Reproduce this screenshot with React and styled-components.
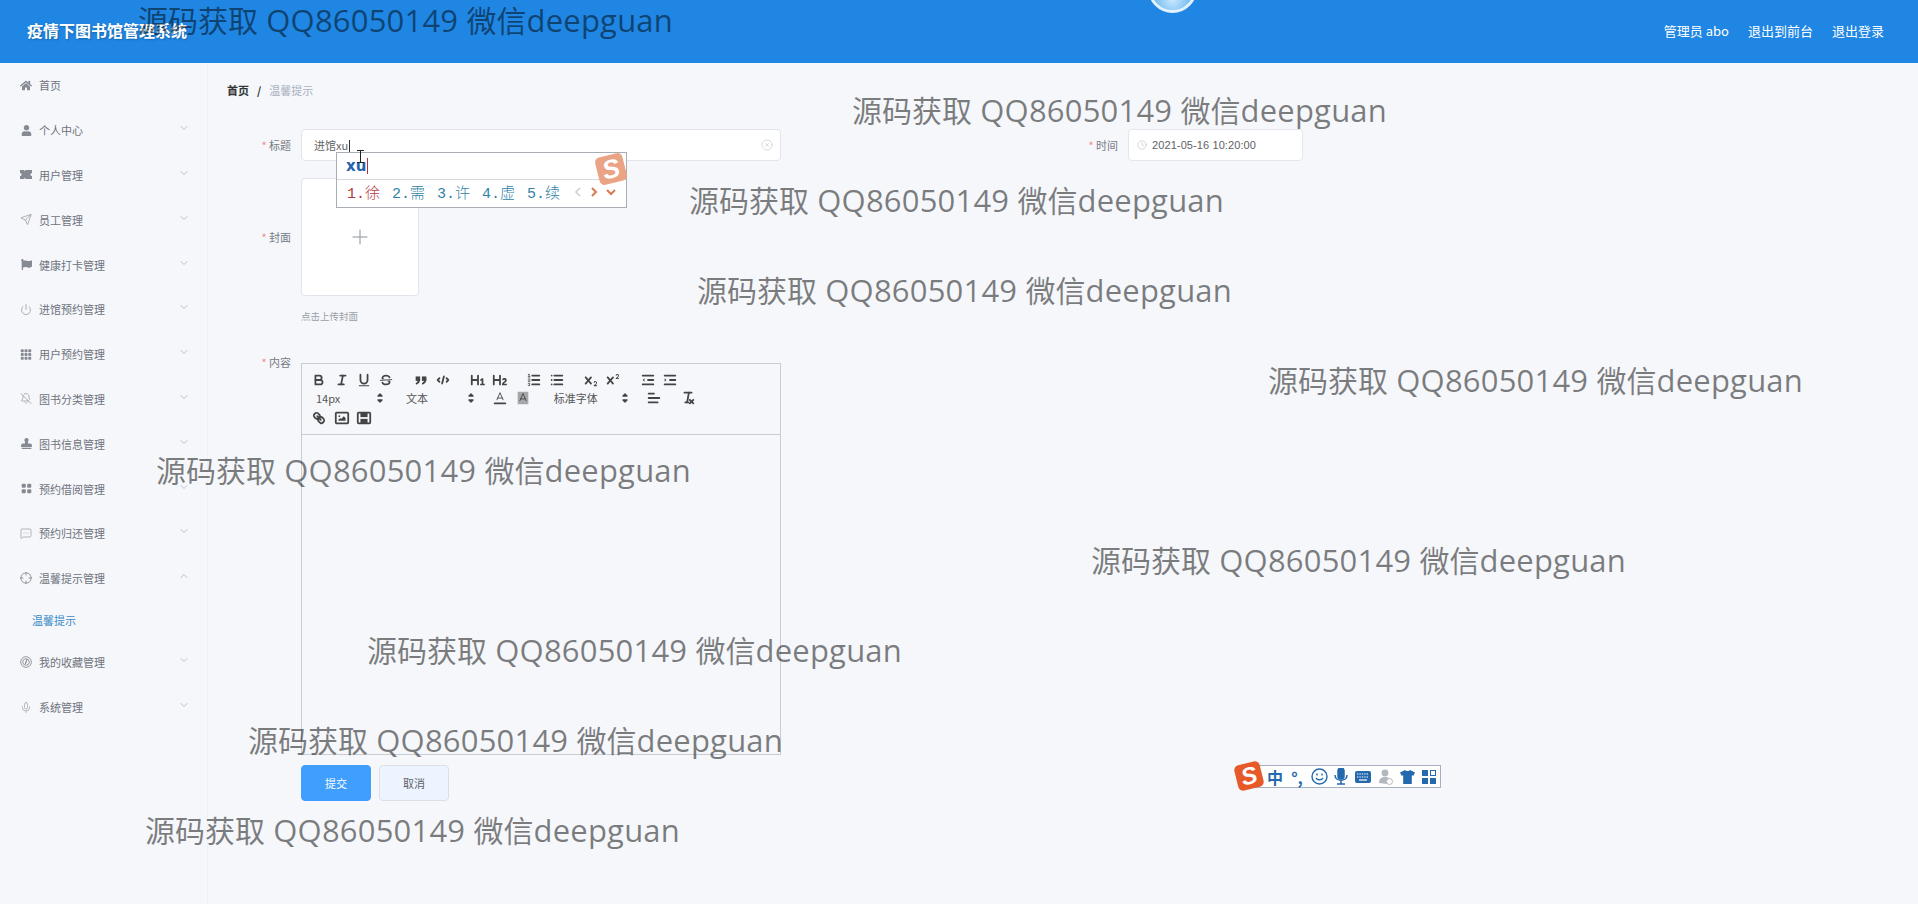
import styled, { createGlobalStyle } from "styled-components";
import { FaHome, FaUser, FaFlag, FaStamp } from "react-icons/fa";
import { BsGrid3X3GapFill, BsGridFill } from "react-icons/bs";
import {
  Send,
  BellOff,
  Power,
  MessageSquareMore,
  Mic,
  ChevronDown,
  ChevronUp,
  Plus,
  Clock,
  CircleX,
} from "lucide-react";

const CJK = `"Noto Sans CJK SC", "Noto Sans", sans-serif`;

const GlobalStyle = createGlobalStyle`
  html, body {
    margin: 0;
    padding: 0;
    background: #f5f7fb;
    font-family: ${CJK};
  }
  * {
    box-sizing: border-box;
  }
`;

const Page = styled.div`
  display: flex;
  flex-direction: column;
  height: 904px;
  overflow: hidden;
  position: relative;
  width: 1918px;
`;

const Header = styled.header`
  align-items: center;
  background: #1f86e3;
  color: #fff;
  display: flex;
  flex: none;
  height: 63px;
  justify-content: space-between;
  padding: 0 34px 3px 27px;
`;

const Title = styled.h1`
  font-size: 16px;
  font-weight: 700;
  margin: 0;
  text-shadow: 1px 1px 2px rgba(0, 0, 0, 0.25);
`;

const HeaderLinks = styled.div`
  display: flex;
  font-size: 13px;
  gap: 19px;
`;

const Avatar = styled.div`
  background: radial-gradient(circle at 50% 75%, #cdeaff 0%, #6db8f0 50%, #2f8fe4 100%);
  border: 3px solid #e2f2fc;
  border-radius: 50%;
  height: 49px;
  left: 1148px;
  position: absolute;
  top: -36px;
  width: 49px;
`;

const Body = styled.div`
  display: flex;
  flex: 1;
  min-height: 0;
`;

const Sidebar = styled.nav`
  background: #f5f7fb;
  border-right: 1px solid #eff1f5;
  flex: none;
  width: 208px;
`;

const MenuItem = styled.div`
  align-items: center;
  color: #6e737c;
  display: flex;
  font-size: 11px;
  height: 44.8px;
  padding: 0 17px 0 20px;
`;

const MenuIcon = styled.span`
  align-items: center;
  color: #868a93;
  display: flex;
  flex: none;
  height: 14px;
  justify-content: center;
  margin-right: 7px;
  width: 12px;
`;

const MenuLabel = styled.span`
  flex: 1;
`;

const MenuArrow = styled.span`
  align-items: center;
  color: #a4a8b0;
  display: flex;
  margin-top: -4px;
`;

const SubItem = styled.div`
  align-items: center;
  color: #3a8ac6;
  display: flex;
  font-size: 11px;
  height: 39.5px;
  padding-left: 32px;
`;

const Main = styled.main`
  flex: 1;
  padding: 0 0 0 19px;
`;

const Breadcrumb = styled.div`
  align-items: center;
  display: flex;
  font-size: 11px;
  height: 54px;
`;

const CrumbHome = styled.span`
  color: #333;
  font-weight: 700;
`;

const CrumbSep = styled.span`
  color: #333;
  font-weight: 700;
  margin: 0 8px;
`;

const CrumbCurrent = styled.span`
  color: #a8b0bd;
`;

const Row = styled.div`
  align-items: center;
  display: flex;
  gap: 273px;
  margin-top: 12px;
`;

const Field = styled.div`
  align-items: ${(p) => p.$align || "center"};
  display: flex;
`;

const Label = styled.label`
  color: #777c85;
  flex: none;
  font-size: 11px;
  height: 32px;
  line-height: 32px;
  padding-right: 10px;
  text-align: right;
  width: 74px;
  &::before {
    color: #f08a8a;
    content: "* ";
  }
`;

const TextInput = styled.div`
  align-items: center;
  background: #fff;
  border: 1px solid #e1e4ea;
  border-radius: 4px;
  color: #666;
  display: flex;
  font-size: 11px;
  height: 32px;
  justify-content: space-between;
  padding: 0 7px 0 12px;
  width: 480px;
`;

const Caret = styled.span`
  border-left: 1px solid #333;
  display: inline-block;
  height: 12px;
  margin-left: 1px;
  vertical-align: -2px;
`;

const DateInput = styled.div`
  align-items: center;
  background: #fff;
  border: 1px solid #e4e7ed;
  border-radius: 4px;
  color: #606266;
  display: flex;
  font-family: "Liberation Sans", sans-serif;
  font-size: 11px;
  gap: 5px;
  height: 32px;
  letter-spacing: 0.1px;
  padding: 0 8px;
  width: 175px;
`;

const UploadRow = styled(Field)`
  margin-top: 17px;
`;

const UploadBox = styled.div`
  align-items: center;
  background: #fff;
  border: 1px solid #e1e4ea;
  border-radius: 4px;
  color: #8c939d;
  display: flex;
  height: 118px;
  justify-content: center;
  width: 118px;
`;

const Hint = styled.div`
  color: #9a9ea6;
  font-size: 9.5px;
  line-height: 14px;
  margin: 13px 0 0 74px;
`;

const EditorRow = styled(Field)`
  margin-top: 23px;
`;

const Editor = styled.div`
  border: 1px solid #c9cdd3;
  display: flex;
  flex-direction: column;
  height: 392px;
  margin-top: 17px;
  width: 480px;
`;

const Toolbar = styled.div`
  border-bottom: 1px solid #c9cdd3;
  display: flex;
  flex: none;
  flex-direction: column;
  height: 71px;
  padding: 6px 0 0 6px;
`;

const ToolRow = styled.div`
  display: flex;
  height: 19px;
`;

const PickerRow = styled(ToolRow)`
  margin: -1px 0 1px;
`;

const ToolGroup = styled.div`
  display: flex;
  margin-right: 12px;
`;

const ToolButton = styled.span`
  align-items: center;
  display: flex;
  height: 19px;
  justify-content: center;
  width: 22.4px;
  & svg {
    fill: none;
    height: 16px;
    stroke: #444;
    stroke-linecap: round;
    stroke-linejoin: round;
    stroke-width: 2px;
    width: 16px;
  }
  & svg .fill {
    fill: #444;
    stroke: none;
  }
  & svg .thin {
    stroke-width: 1px;
  }
`;

const Picker = styled.div`
  align-items: center;
  color: #555;
  display: flex;
  font-size: 11px;
  height: 19px;
  justify-content: space-between;
  margin-right: 12px;
  padding-left: 8px;
  width: ${(p) => p.$width}px;
  & svg {
    height: 18px;
    margin-right: -3px;
    width: 18px;
  }
`;

const EditorArea = styled.div`
  flex: 1;
`;

const Actions = styled.div`
  display: flex;
  gap: 8px;
  margin: 10px 0 0 74px;
`;

const Button = styled.button`
  background: ${(p) => (p.$primary ? "#409eff" : "#ecf5ff")};
  border: 1px solid ${(p) => (p.$primary ? "#409eff" : "#dcdfe6")};
  border-radius: 4px;
  color: ${(p) => (p.$primary ? "#fff" : "#606266")};
  font-family: ${CJK};
  font-size: 11px;
  height: 36px;
  padding: 0;
  width: 70px;
`;

const Watermark = styled.div`
  color: rgba(0, 0, 0, 0.5);
  font-family: ${CJK};
  font-size: 30px;
  left: ${(p) => p.$x}px;
  line-height: 40px;
  pointer-events: none;
  position: absolute;
  top: ${(p) => p.$y}px;
  white-space: pre;
  z-index: 5;
`;

const Latin = styled.span`
  font-family: "Open Sans", sans-serif;
  font-size: 31px;
  letter-spacing: 0.2px;
`;

const Beam = styled.div`
  border-left: 1px solid #222;
  height: 13px;
  left: 360px;
  position: absolute;
  top: 150px;
  z-index: 4;
  &::before,
  &::after {
    border-top: 1px solid #222;
    content: "";
    left: -4px;
    position: absolute;
    width: 7px;
  }
  &::before {
    top: 0;
  }
  &::after {
    bottom: 0;
  }
`;

const Candidates = styled.div`
  background: #fff;
  border: 1px solid #a9aeb5;
  height: 56px;
  left: 336px;
  position: absolute;
  top: 152px;
  width: 291px;
  z-index: 3;
`;

const Pinyin = styled.div`
  align-items: center;
  border-bottom: 1px solid #d5d8dc;
  color: #1f64ad;
  display: flex;
  font-family: "DejaVu Sans", sans-serif;
  font-size: 15px;
  font-weight: 700;
  height: 27px;
  padding-left: 9px;
`;

const RedCaret = styled.span`
  border-left: 1px solid #b03040;
  height: 16px;
  margin-left: 1px;
`;

const CandidateRow = styled.div`
  align-items: center;
  display: flex;
  height: 27px;
  padding: 0 0 3px 10px;
`;

const Candidate = styled.span`
  color: ${(p) => (p.$active ? "#b5343c" : "#2f83a6")};
  font-family: "Liberation Mono", "Noto Sans CJK SC", monospace;
  font-size: 15px;
  font-weight: 300;
  width: 45px;
`;

const PageArrows = styled.span`
  align-items: center;
  display: flex;
  gap: 8px;
  margin-left: 2px;
`;

const SogouLogo = styled.div`
  align-items: center;
  background: ${(p) => (p.$faded ? "#eba385" : "#e8592a")};
  border-radius: 5px;
  color: #fff;
  display: flex;
  font-family: "Liberation Sans", sans-serif;
  font-size: ${(p) => p.$size - 2}px;
  font-style: italic;
  font-weight: 700;
  height: ${(p) => p.$size}px;
  justify-content: center;
  line-height: 1;
  position: absolute;
  transform: rotate(-14deg);
  width: ${(p) => p.$size}px;
`;

const CandidateLogo = styled(SogouLogo)`
  right: 1px;
  top: 2px;
`;

const StatusBar = styled.div`
  align-items: center;
  background: #fff;
  border: 1px solid #a5b0c0;
  color: #2468ad;
  display: flex;
  height: 23px;
  left: 1250px;
  padding-left: 13px;
  position: absolute;
  top: 765px;
  width: 191px;
  z-index: 3;
`;

const StatusLogo = styled(SogouLogo)`
  left: -15px;
  top: -3px;
`;

const StatusItem = styled.span`
  align-items: center;
  display: flex;
  font-size: 16px;
  font-weight: 700;
  height: 100%;
  justify-content: center;
  width: 22px;
`;

const TicketIcon = () => (
  <svg width="15" height="11" viewBox="0 0 15 11" fill="currentColor">
    <path d="M0 0h5l1 1.5L7 0h8v3.5a2 2 0 0 0 0 4V11H7l-1-1.5L5 11H0V7.5a2 2 0 0 0 0-4z" />
  </svg>
);

const AimIcon = () => (
  <svg width="14" height="14" viewBox="0 0 14 14" fill="none" stroke="currentColor" strokeWidth="1">
    <circle cx="7" cy="7" r="6" />
    <path d="M7 0v4M7 10v4M0 7h4M10 7h4" />
  </svg>
);

const OdometerIcon = () => (
  <svg width="14" height="14" viewBox="0 0 14 14" fill="none" stroke="currentColor" strokeWidth="1">
    <circle cx="7" cy="7" r="6.2" />
    <circle cx="7" cy="7" r="3.8" />
    <path d="M6.2 9.4L8.2 3.6" strokeWidth="1.4" />
  </svg>
);

const MENU = [
  { label: "个人中心", icon: <FaUser size={11} /> },
  { label: "用户管理", icon: <TicketIcon /> },
  { label: "员工管理", icon: <Send size={13} strokeWidth={1.3} /> },
  { label: "健康打卡管理", icon: <FaFlag size={11} /> },
  { label: "进馆预约管理", icon: <Power size={13} strokeWidth={1.3} /> },
  { label: "用户预约管理", icon: <BsGrid3X3GapFill size={13} /> },
  { label: "图书分类管理", icon: <BellOff size={13} strokeWidth={1.3} /> },
  { label: "图书信息管理", icon: <FaStamp size={11} /> },
  { label: "预约借阅管理", icon: <BsGridFill size={11} /> },
  { label: "预约归还管理", icon: <MessageSquareMore size={13} strokeWidth={1.2} /> },
];

const WATERMARKS = [
  [138, -1],
  [852, 89],
  [689, 179],
  [697, 269],
  [1268, 359],
  [156, 449],
  [1091, 539],
  [367, 629],
  [248, 719],
  [145, 809],
];

const X_SHAPE =
  "M9.651,5.241a1,1,0,0,0-1.41.108L6,7.964,3.759,5.349a1,1,0,1,0-1.519,1.3L4.683,9.5,2.241,12.35a1,1,0,1,0,1.519,1.3L6,11.036,8.241,13.65a1,1,0,0,0,1.519-1.3L7.317,9.5,9.759,6.651A1,1,0,0,0,9.651,5.241Z";

// quill toolbar glyphs
const QUILL = {
  bold: (
    <>
      <path d="M5,4H9.5A2.5,2.5,0,0,1,12,6.5v0A2.5,2.5,0,0,1,9.5,9H5A0,0,0,0,1,5,9V4A0,0,0,0,1,5,4Z" />
      <path d="M5,9h5.5A2.5,2.5,0,0,1,13,11.5v0A2.5,2.5,0,0,1,10.5,14H5a0,0,0,0,1,0,0V9A0,0,0,0,1,5,9Z" />
    </>
  ),
  italic: (
    <>
      <line x1="7" x2="13" y1="4" y2="4" />
      <line x1="5" x2="11" y1="14" y2="14" />
      <line x1="8" x2="10" y1="14" y2="4" />
    </>
  ),
  underline: (
    <>
      <path d="M5,3V9a4.012,4.012,0,0,0,4,4H9a4.012,4.012,0,0,0,4-4V3" />
      <rect className="fill" x="3" y="15" width="12" height="1" rx="0.5" />
    </>
  ),
  strike: (
    <>
      <line className="thin" x1="15.5" x2="2.5" y1="8.5" y2="9.5" />
      <path className="fill" d="M9.007,8C6.542,7.791,6,7.519,6,6.5,6,5.792,7.283,5,9,5c1.571,0,2.765.679,2.969,1.309a1,1,0,0,0,1.9-.617C13.356,4.106,11.354,3,9,3,6.2,3,4,4.538,4,6.5a3.2,3.2,0,0,0,.5,1.843Z" />
      <path className="fill" d="M8.984,10C11.457,10.208,12,10.479,12,11.5c0,.708-1.283,1.5-3,1.5-1.571,0-2.765-.679-2.969-1.309a1,1,0,1,0-1.9.617C4.644,13.894,6.646,15,9,15c2.8,0,5-1.538,5-3.5a3.2,3.2,0,0,0-.5-1.843Z" />
    </>
  ),
  quote: (
    <>
      <rect className="fill" x="3" y="5" width="5" height="5" />
      <rect className="fill" x="10" y="5" width="5" height="5" />
      <path d="M7,8c0,4.031-3,5-3,5" />
      <path d="M14,8c0,4.031-3,5-3,5" />
    </>
  ),
  code: (
    <>
      <polyline points="5 7 3 9 5 11" />
      <polyline points="13 7 15 9 13 11" />
      <line x1="10" x2="8" y1="5" y2="13" />
    </>
  ),
  h1: (
    <path className="fill" d="M10,4V14a1,1,0,0,1-2,0V10H3v4a1,1,0,0,1-2,0V4A1,1,0,0,1,3,4V8H8V4a1,1,0,0,1,2,0Zm6.06787,9.209H14.98975V7.59863a.54085.54085,0,0,0-.605-.60547h-.62744a1.01119,1.01119,0,0,0-.748.29688L11.645,8.56641a.5435.5435,0,0,0-.022.8584l.28613.30762a.53861.53861,0,0,0,.84717.0332l.09912-.08789a1.2137,1.2137,0,0,0,.2417-.35254h.02246s-.01123.30859-.01123.60547V13.209H12.041a.54085.54085,0,0,0-.605.60547v.43945a.54085.54085,0,0,0,.605.60547h4.02686a.54085.54085,0,0,0,.605-.60547v-.43945A.54085.54085,0,0,0,16.06787,13.209Z" />
  ),
  h2: (
    <path className="fill" d="M16.73975,13.81445v.43945a.54085.54085,0,0,1-.605.60547H11.855a.58392.58392,0,0,1-.64893-.60547V14.0127c0-2.90527,3.39941-3.42187,3.39941-4.55469a.77675.77675,0,0,0-.84717-.78125,1.17684,1.17684,0,0,0-.83594.38477c-.2749.26367-.561.374-.85791.13184l-.4292-.34082c-.30811-.24219-.38525-.51758-.1543-.81445a2.97155,2.97155,0,0,1,2.45361-1.17676,2.45393,2.45393,0,0,1,2.68408,2.40918c0,2.45312-3.1792,2.92676-3.27832,3.93848h2.79443A.54085.54085,0,0,1,16.73975,13.81445ZM9,3A.99974.99974,0,0,0,8,4V8H3V4A1,1,0,0,0,1,4V14a1,1,0,0,0,2,0V10H8v4a1,1,0,0,0,2,0V4A.99974.99974,0,0,0,9,3Z" />
  ),
  ordered: (
    <>
      <line x1="7" x2="15" y1="4" y2="4" />
      <line x1="7" x2="15" y1="9" y2="9" />
      <line x1="7" x2="15" y1="14" y2="14" />
      <line className="thin" x1="2.5" x2="4.5" y1="5.5" y2="5.5" />
      <path className="fill" d="M3.5,6A0.5,0.5,0,0,1,3,5.5V3.085l-0.276.138A0.5,0.5,0,0,1,2.053,3c-0.124-.247-0.023-0.324.224-0.447l1-.5A0.5,0.5,0,0,1,4,2.5v3A0.5,0.5,0,0,1,3.5,6Z" />
      <path className="thin" d="M4.5,10.5h-2c0-.234,1.85-1.076,1.85-2.234A0.959,0.959,0,0,0,2.5,8.156" />
      <path className="thin" d="M2.5,14.846a0.959,0.959,0,0,0,1.85-.109A0.7,0.7,0,0,0,3.75,14a0.688,0.688,0,0,0,.6-0.736,0.959,0.959,0,0,0-1.85-.109" />
    </>
  ),
  bullet: (
    <>
      <line x1="6" x2="15" y1="4" y2="4" />
      <line x1="6" x2="15" y1="9" y2="9" />
      <line x1="6" x2="15" y1="14" y2="14" />
      <line x1="3" x2="3" y1="4" y2="4" />
      <line x1="3" x2="3" y1="9" y2="9" />
      <line x1="3" x2="3" y1="14" y2="14" />
    </>
  ),
  sub: (
    <>
      <path className="fill" d={X_SHAPE} />
      <path className="fill" d="M15.5,15H13.861a3.858,3.858,0,0,0,1.914-2.975,1.8,1.8,0,0,0-1.6-1.751A1.921,1.921,0,0,0,12.021,11.7a0.50013,0.50013,0,1,0,.957.291h0a0.914,0.914,0,0,1,1.053-.725,0.81,0.81,0,0,1,.744.762c0,1.076-1.16971,1.86982-1.93971,2.43082A1.45639,1.45639,0,0,0,12,15.5a0.5,0.5,0,0,0,.5.5h3A0.5,0.5,0,0,0,15.5,15Z" />
    </>
  ),
  sup: (
    <>
      <path className="fill" d={X_SHAPE} />
      <path className="fill" d="M15.5,7H13.861a4.015,4.015,0,0,0,1.914-2.975,1.8,1.8,0,0,0-1.6-1.751A1.922,1.922,0,0,0,12.021,3.7a0.5,0.5,0,1,0,.957.291,0.917,0.917,0,0,1,1.053-.725,0.81,0.81,0,0,1,.744.762c0,1.077-1.164,1.925-1.934,2.486A1.423,1.423,0,0,0,12,7.5a0.5,0.5,0,0,0,.5.5h3A0.5,0.5,0,0,0,15.5,7Z" />
    </>
  ),
  outdent: (
    <>
      <line x1="3" x2="15" y1="14" y2="14" />
      <line x1="3" x2="15" y1="4" y2="4" />
      <line x1="9" x2="15" y1="9" y2="9" />
      <polygon className="fill" points="5 7 5 11 3 9 5 7" />
    </>
  ),
  indent: (
    <>
      <line x1="3" x2="15" y1="14" y2="14" />
      <line x1="3" x2="15" y1="4" y2="4" />
      <line x1="9" x2="15" y1="9" y2="9" />
      <polygon className="fill" points="3 7 3 11 5 9 3 7" />
    </>
  ),
  color: (
    <>
      <line x1="3" x2="15" y1="15" y2="15" />
      <polyline className="thin" points="5.5 11 9 3 12.5 11" />
      <line className="thin" x1="11.63" x2="6.38" y1="9" y2="9" />
    </>
  ),
  background: (
    <>
      <rect className="fill" x="3" y="2" width="12" height="14" opacity="0.45" />
      <polyline className="thin" points="5.5 12 9 4 12.5 12" />
      <line className="thin" x1="11.63" x2="6.38" y1="10" y2="10" />
    </>
  ),
  align: (
    <>
      <line x1="3" x2="15" y1="9" y2="9" />
      <line x1="3" x2="13" y1="14" y2="14" />
      <line x1="3" x2="9" y1="4" y2="4" />
    </>
  ),
  clean: (
    <>
      <line x1="5" x2="13" y1="3" y2="3" />
      <line x1="6" x2="9.35" y1="14" y2="14" />
      <line x1="10" x2="8" y1="3" y2="14" />
      <line x1="11" x2="15" y1="11" y2="15" />
      <line x1="15" x2="11" y1="11" y2="15" />
    </>
  ),
  link: (
    <>
      <line x1="7" x2="11" y1="7" y2="11" />
      <path d="M8.9,4.577a3.476,3.476,0,0,1,.36,4.679A3.476,3.476,0,0,1,4.577,8.9C3.185,7.5,2.035,6.4,4.217,4.217S7.5,3.185,8.9,4.577Z" />
      <path d="M13.423,9.1a3.476,3.476,0,0,0-4.679-.36,3.476,3.476,0,0,0,.36,4.679c1.392,1.392,2.5,2.542,4.679.36S14.815,10.5,13.423,9.1Z" />
    </>
  ),
  image: (
    <>
      <rect x="2" y="3" width="14" height="12" rx="1" />
      <circle className="fill" cx="6" cy="7" r="1" />
      <polyline className="fill" points="5 12 5 11 7 9 8 10 11 7 13 9 13 12 5 12" />
    </>
  ),
  video: (
    <>
      <rect x="2" y="3" width="14" height="12" rx="1" />
      <rect className="fill" x="5" y="3" width="8" height="5" />
      <rect className="fill" x="5" y="10" width="8" height="5" />
    </>
  ),
};

function Tool({ name }) {
  return (
    <ToolButton>
      <svg viewBox="0 0 18 18">{QUILL[name]}</svg>
    </ToolButton>
  );
}

function Tools({ names }) {
  return (
    <ToolGroup>
      {names.map((n) => (
        <Tool key={n} name={n} />
      ))}
    </ToolGroup>
  );
}

function Select({ width, children }) {
  return (
    <Picker $width={width}>
      {children}
      <svg viewBox="0 0 18 18">
        <polygon points="7 11 9 13 11 11 7 11" stroke="#444" strokeWidth="1.4" fill="#444" strokeLinejoin="round" />
        <polygon points="7 7 9 5 11 7 7 7" stroke="#444" strokeWidth="1.4" fill="#444" strokeLinejoin="round" />
      </svg>
    </Picker>
  );
}

function Nav({ item, open }) {
  return (
    <MenuItem>
      <MenuIcon>{item.icon}</MenuIcon>
      <MenuLabel>{item.label}</MenuLabel>
      <MenuArrow>
        {open ? <ChevronUp size={12} strokeWidth={1.4} /> : <ChevronDown size={12} strokeWidth={1.4} />}
      </MenuArrow>
    </MenuItem>
  );
}

export default function App() {
  return (
    <Page>
      <GlobalStyle />
      <Header>
        <Title>疫情下图书馆管理系统</Title>
        <HeaderLinks>
          <span>管理员 abo</span>
          <span>退出到前台</span>
          <span>退出登录</span>
        </HeaderLinks>
      </Header>
      <Avatar />

      <Body>
        <Sidebar>
          <MenuItem>
            <MenuIcon>
              <FaHome size={13} />
            </MenuIcon>
            <MenuLabel>首页</MenuLabel>
          </MenuItem>
          {MENU.map((item) => (
            <Nav key={item.label} item={item} />
          ))}
          <Nav item={{ label: "温馨提示管理", icon: <AimIcon /> }} open />
          <SubItem>温馨提示</SubItem>
          <Nav item={{ label: "我的收藏管理", icon: <OdometerIcon /> }} />
          <Nav item={{ label: "系统管理", icon: <Mic size={15} strokeWidth={1.1} /> }} />
        </Sidebar>

        <Main>
          <Breadcrumb>
            <CrumbHome>首页</CrumbHome>
            <CrumbSep>/</CrumbSep>
            <CrumbCurrent>温馨提示</CrumbCurrent>
          </Breadcrumb>

          <Row>
            <Field>
              <Label>标题</Label>
              <TextInput>
                <span>
                  进馆xu
                  <Caret />
                </span>
                <CircleX size={12} strokeWidth={1.2} color="#c0c4cc" />
              </TextInput>
            </Field>
            <Field>
              <Label>时间</Label>
              <DateInput>
                <Clock size={10} strokeWidth={1.3} color="#b4b8c0" />
                2021-05-16 10:20:00
              </DateInput>
            </Field>
          </Row>

          <UploadRow>
            <Label>封面</Label>
            <UploadBox>
              <Plus size={24} strokeWidth={1} />
            </UploadBox>
          </UploadRow>
          <Hint>点击上传封面</Hint>

          <EditorRow $align="flex-start">
            <Label>内容</Label>
            <Editor>
              <Toolbar>
                <ToolRow>
                  <Tools names={["bold", "italic", "underline", "strike"]} />
                  <Tools names={["quote", "code"]} />
                  <Tools names={["h1", "h2"]} />
                  <Tools names={["ordered", "bullet"]} />
                  <Tools names={["sub", "sup"]} />
                  <Tools names={["outdent", "indent"]} />
                </ToolRow>
                <PickerRow>
                  <Select width={78}>14px</Select>
                  <Select width={79}>文本</Select>
                  <Tools names={["color", "background"]} />
                  <Select width={85}>标准字体</Select>
                  <Tools names={["align"]} />
                  <Tools names={["clean"]} />
                </PickerRow>
                <ToolRow>
                  <Tools names={["link", "image", "video"]} />
                </ToolRow>
              </Toolbar>
              <EditorArea />
            </Editor>
          </EditorRow>

          <Actions>
            <Button $primary>提交</Button>
            <Button>取消</Button>
          </Actions>
        </Main>
      </Body>

      <Beam />
      <Candidates>
        <Pinyin>
          xu
          <RedCaret />
        </Pinyin>
        <CandidateRow>
          <Candidate $active>1.徐</Candidate>
          <Candidate>2.需</Candidate>
          <Candidate>3.许</Candidate>
          <Candidate>4.虚</Candidate>
          <Candidate>5.续</Candidate>
          <PageArrows>
            <svg width="8" height="10" viewBox="0 0 8 10" fill="none" stroke="#cfcfcf" strokeWidth="1.6">
              <path d="M6 1L2 5l4 4" />
            </svg>
            <svg width="8" height="10" viewBox="0 0 8 10" fill="none" stroke="#dc7a50" strokeWidth="2">
              <path d="M2 1l4 4-4 4" />
            </svg>
            <svg width="10" height="8" viewBox="0 0 10 8" fill="none" stroke="#dc7a50" strokeWidth="2">
              <path d="M1 2l4 4 4-4" />
            </svg>
          </PageArrows>
        </CandidateRow>
        <CandidateLogo $faded $size={28}>S</CandidateLogo>
      </Candidates>

      <StatusBar>
        <StatusLogo $size={26}>S</StatusLogo>
        <StatusItem>中</StatusItem>
        <StatusItem>°,</StatusItem>
        <StatusItem>
          <svg width="17" height="17" viewBox="0 0 17 17" fill="none" stroke="currentColor" strokeWidth="1.4">
            <circle cx="8.5" cy="8.5" r="7.5" />
            <path d="M5 10c1 2.4 6 2.4 7 0" />
            <path d="M6 5.5v2M11 5.5v2" />
          </svg>
        </StatusItem>
        <StatusItem>
          <svg width="14" height="17" viewBox="0 0 14 17" fill="none" stroke="currentColor" strokeWidth="1.5">
            <rect x="4" y="0" width="6" height="11" rx="3" fill="currentColor" />
            <path d="M1 7c0 7 12 7 12 0M7 12v4M3 16h8" />
          </svg>
        </StatusItem>
        <StatusItem>
          <svg width="16" height="12" viewBox="0 0 16 12">
            <rect x="0" y="0" width="16" height="12" rx="2" fill="currentColor" />
            <path d="M2 3h12M2 6h12" stroke="#fff" strokeWidth="1.2" strokeDasharray="1.4 1" />
            <path d="M4 9h8" stroke="#fff" strokeWidth="1.2" />
          </svg>
        </StatusItem>
        <StatusItem>
          <svg width="15" height="16" viewBox="0 0 15 16" fill="#b3b8c0">
            <circle cx="7" cy="4" r="3.4" />
            <path d="M1 14c0-4 2-6 6-6s5 2 5 3l-3 4z" />
            <circle cx="11.5" cy="12.5" r="3" fill="#fff" stroke="#b3b8c0" />
          </svg>
        </StatusItem>
        <StatusItem>
          <svg width="15" height="14" viewBox="0 0 15 14" fill="currentColor">
            <path d="M5 0c1 1.4 4 1.4 5 0l5 2.4-1.6 3.4-1.6-.6V14H3.2V5.2l-1.6.6L0 2.4z" />
          </svg>
        </StatusItem>
        <StatusItem>
          <svg width="14" height="14" viewBox="0 0 14 14" fill="currentColor">
            <rect x="0" y="0" width="6" height="6" />
            <rect x="8.5" y="0.5" width="5" height="5" fill="none" stroke="currentColor" />
            <rect x="0" y="8" width="6" height="6" />
            <rect x="8" y="8" width="6" height="6" />
          </svg>
        </StatusItem>
      </StatusBar>

      {WATERMARKS.map(([x, y]) => (
        <Watermark key={y} $x={x} $y={y}>
          源码获取<Latin> QQ86050149 </Latin>微信<Latin>deepguan</Latin>
        </Watermark>
      ))}
    </Page>
  );
}
